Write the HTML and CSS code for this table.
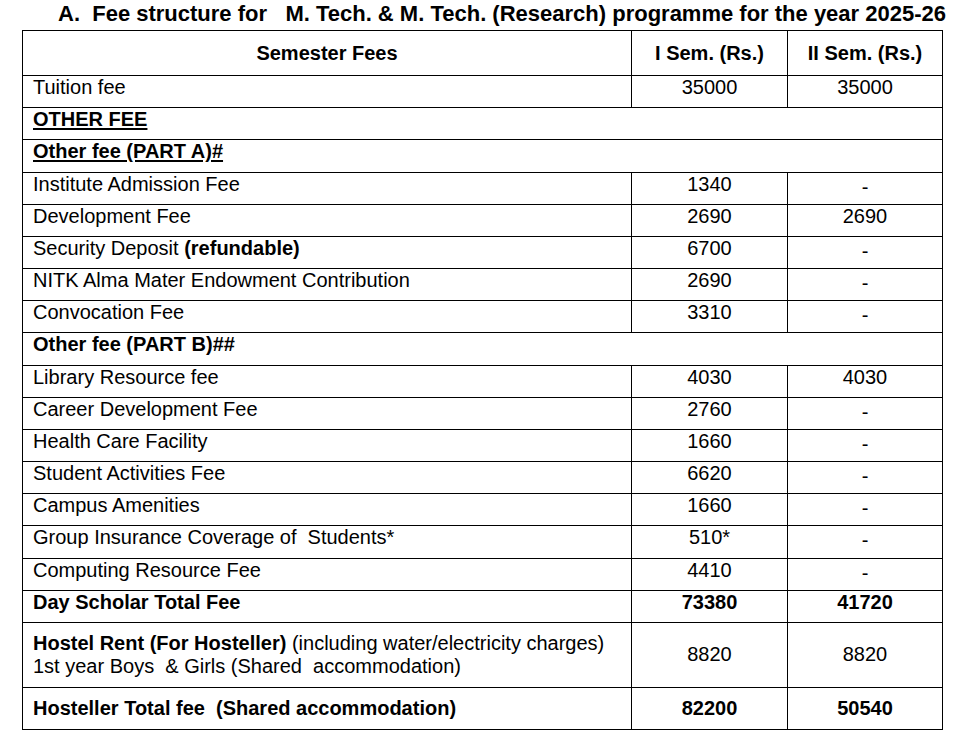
FILE: index.html
```html
<!DOCTYPE html>
<html>
<head>
<meta charset="utf-8">
<link rel="stylesheet" href="styles.css">
</head>
<body>
<div class="page">
  <h1 class="title">A.  Fee structure for   M. Tech. &amp; M. Tech. (Research) programme for the year 2025-26</h1>
  <table class="fees">
    <colgroup>
      <col class="c1"><col class="c2"><col class="c3">
    </colgroup>
    <tr class="head">
      <th>Semester Fees</th><th>I Sem. (Rs.)</th><th>II Sem. (Rs.)</th>
    </tr>
    <tr class="row"><td class="lbl">Tuition fee</td><td class="num">35000</td><td class="num">35000</td></tr>
    <tr class="row"><td class="lbl" colspan="3"><b class="u">OTHER FEE</b></td></tr>
    <tr class="row"><td class="lbl" colspan="3"><b class="u">Other fee (PART A)#</b></td></tr>
    <tr class="row"><td class="lbl">Institute Admission Fee</td><td class="num">1340</td><td class="num dash">-</td></tr>
    <tr class="row"><td class="lbl">Development Fee</td><td class="num">2690</td><td class="num">2690</td></tr>
    <tr class="row"><td class="lbl">Security Deposit <b>(refundable)</b></td><td class="num">6700</td><td class="num dash">-</td></tr>
    <tr class="row"><td class="lbl">NITK Alma Mater Endowment Contribution</td><td class="num">2690</td><td class="num dash">-</td></tr>
    <tr class="row"><td class="lbl">Convocation Fee</td><td class="num">3310</td><td class="num dash">-</td></tr>
    <tr class="row"><td class="lbl" colspan="3"><b>Other fee (PART B)##</b></td></tr>
    <tr class="row"><td class="lbl">Library Resource fee</td><td class="num">4030</td><td class="num">4030</td></tr>
    <tr class="row"><td class="lbl">Career Development Fee</td><td class="num">2760</td><td class="num dash">-</td></tr>
    <tr class="row"><td class="lbl">Health Care Facility</td><td class="num">1660</td><td class="num dash">-</td></tr>
    <tr class="row"><td class="lbl">Student Activities Fee</td><td class="num">6620</td><td class="num dash">-</td></tr>
    <tr class="row"><td class="lbl">Campus Amenities</td><td class="num">1660</td><td class="num dash">-</td></tr>
    <tr class="row"><td class="lbl">Group Insurance Coverage of  Students*</td><td class="num">510*</td><td class="num dash">-</td></tr>
    <tr class="row"><td class="lbl">Computing Resource Fee</td><td class="num">4410</td><td class="num dash">-</td></tr>
    <tr class="row"><td class="lbl"><b>Day Scholar Total Fee</b></td><td class="num"><b>73380</b></td><td class="num"><b>41720</b></td></tr>
    <tr class="hostel"><td class="lbl"><b>Hostel Rent (For Hosteller)</b> (including water/electricity charges)<br>1st year Boys  &amp; Girls (Shared  accommodation)</td><td class="num">8820</td><td class="num">8820</td></tr>
    <tr class="total"><td class="lbl"><b>Hosteller Total fee  (Shared accommodation)</b></td><td class="num"><b>82200</b></td><td class="num"><b>50540</b></td></tr>
  </table>
</div>
</body>
</html>
```
FILE: styles.css
```css
html, body {
  margin: 0;
  padding: 0;
  background: #fff;
}
body {
  font-family: "Liberation Sans", Arial, sans-serif;
  color: #000;
}
.page {
  padding: 0 0 0 22px;
}
.title {
  margin: 0;
  padding: 1px 0 0 36px;
  height: 29px;
  font-size: 22px;
  line-height: 26px;
  font-weight: bold;
  white-space: pre;
}
.fees {
  border-collapse: collapse;
  table-layout: fixed;
  width: 920px;
  font-size: 20px;
}
.c1 { width: 609px; }
.c2 { width: 156px; }
.c3 { width: 155px; }
.fees th, .fees td {
  border: 1px solid #000;
  padding: 0;
}
.head th {
  height: 44px;
  font-weight: bold;
  text-align: center;
  vertical-align: middle;
  line-height: 23px;
}
.row td {
  height: 31.18px;
  vertical-align: top;
  line-height: 23px;
}
.lbl {
  text-align: left;
  padding-left: 10px !important;
  white-space: pre;
}
.num {
  text-align: center;
}
.row td.dash {
  line-height: 28px;
}
.u {
  text-decoration: underline;
  text-decoration-thickness: 2px;
  text-underline-offset: 2px;
}
.hostel td {
  height: 64px;
  vertical-align: middle;
  line-height: 23px;
}
.total td {
  height: 41px;
  vertical-align: middle;
  line-height: 23px;
}
```
